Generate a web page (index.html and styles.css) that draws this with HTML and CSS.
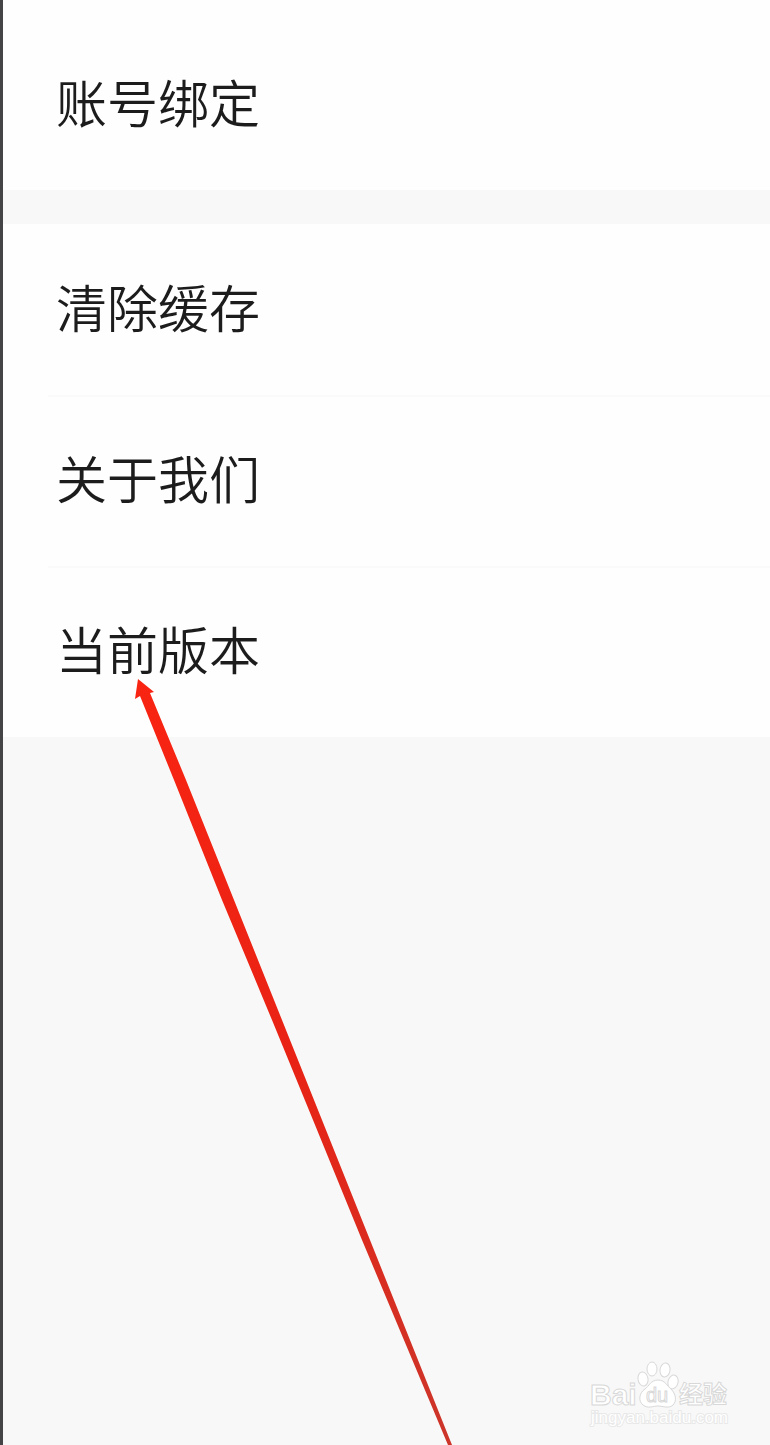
FILE: index.html
```html
<!DOCTYPE html>
<html lang="zh-CN">
<head>
  <meta charset="UTF-8">
  <meta name="viewport" content="width=device-width, initial-scale=1.0">
  <title>设置</title>
  <link rel="stylesheet" href="styles.css">
</head>
<body>
  <main class="settings">
    <nav class="group group-first">
      <a class="row" href="#account">账号绑定</a>
    </nav>
    <nav class="group">
      <a class="row" href="#cache">清除缓存</a>
      <a class="row" href="#about">关于我们</a>
      <a class="row" href="#version">当前版本</a>
    </nav>
  </main>

  <svg class="arrow" viewBox="0 0 320 766" aria-hidden="true">
    <defs>
      <linearGradient id="arrowFill" x1="0" y1="0" x2="0" y2="1">
        <stop offset="0" stop-color="#f92412"/>
        <stop offset="0.5" stop-color="#e82315"/>
        <stop offset="1" stop-color="#cc352a"/>
      </linearGradient>
    </defs>
    <path fill="url(#arrowFill)" d="M7 0 L23 13 L19 14 L55 101 L103 221 L151 341 L191 441 L239 561 L321 766 L317 766 L231 561 L182 441 L141 341 L91 221 L43 101 L9 17 L4 20 Z"/>
  </svg>

  <svg class="watermark" viewBox="0 0 150 75">
    <text class="mark bai" x="5" y="45">Bai</text>
    <g class="mark">
      <ellipse cx="58" cy="19" rx="5" ry="7" transform="rotate(-10 58 19)"/>
      <ellipse cx="67" cy="9" rx="5" ry="7"/>
      <ellipse cx="80" cy="10" rx="5" ry="7" transform="rotate(8 80 10)"/>
      <ellipse cx="88" cy="22" rx="5" ry="7" transform="rotate(15 88 22)"/>
      <path d="M73 20 C66 20 64 26 60 29 C54 33 53 41 58 45 C63 49 68 46 73 46 C78 46 84 49 88 45 C92 41 91 34 86 29 C82 26 80 20 73 20 Z"/>
    </g>
    <text class="mark du" x="61" y="42">du</text>
    <text class="mark jingyan" x="94" y="43">经验</text>
    <text class="mark url" x="6" y="63">jingyan.baidu.com</text>
  </svg>
</body>
</html>
```
FILE: styles.css
```css
* {
  box-sizing: border-box;
}
body {
  position: relative;
  min-height: 100vh;
  margin: 0;
  overflow: hidden;
  border-left: 3px solid #444446;
  background-color: #f8f8f8;
  font-family: "Noto Sans CJK SC", sans-serif;
}
.group {
  background-color: #fefefe;
}
.group-first {
  padding-top: 19px;
  margin-bottom: 34px;
}
.row {
  display: flex;
  align-items: center;
  position: relative;
  height: 171px;
  padding: 0 53px 8px;
  color: #1c1c1c;
  font-size: 51px;
  font-weight: 350;
  line-height: 72px;
  text-decoration: none;
}
.row + .row::before {
  content: "";
  position: absolute;
  top: 0;
  left: 45px;
  right: 0;
  height: 2px;
  background-color: #fafafa;
}
.arrow {
  position: absolute;
  top: 679px;
  left: 128px;
  width: 320px;
  height: 766px;
  overflow: visible;
}
.watermark {
  position: absolute;
  right: 35px;
  bottom: 10px;
  width: 150px;
  height: 75px;
  overflow: visible;
}
.mark {
  fill: #ffffff;
  stroke: #d8d8d8;
  stroke-width: 1px;
}
.bai {
  font-family: "Liberation Sans", Arial, sans-serif;
  font-size: 30px;
  font-weight: bold;
}
.du {
  font-family: "Liberation Sans", Arial, sans-serif;
  font-size: 20px;
}
.jingyan {
  font-size: 24px;
  font-weight: bold;
}
.url {
  font-family: "Liberation Sans", Arial, sans-serif;
  font-size: 17px;
  stroke: #e8e8e8;
  stroke-width: 2px;
  paint-order: stroke;
}
```
